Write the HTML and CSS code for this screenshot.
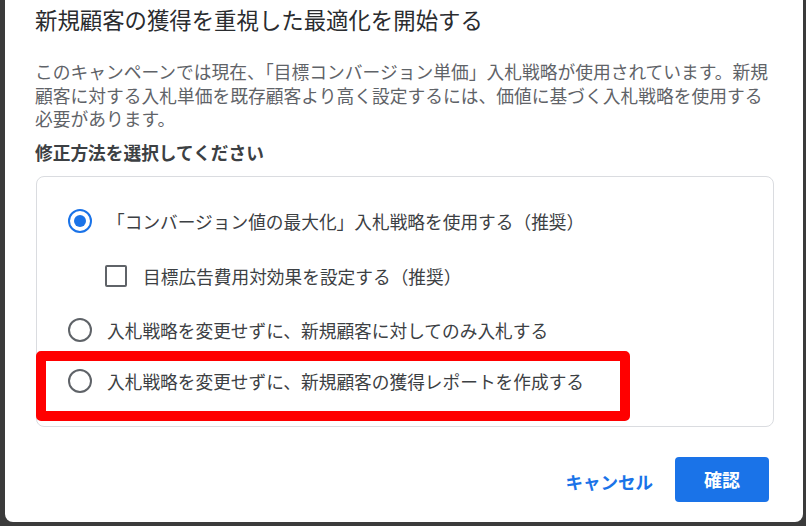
FILE: index.html
```html
<!DOCTYPE html>
<html lang="ja">
<head>
<meta charset="utf-8">
<title>新規顧客の獲得を重視した最適化を開始する</title>
<link rel="stylesheet" href="styles.css">
</head>
<body>
<div class="screen">
  <div class="dialog">
    <h1 class="title">新規顧客の獲得を重視した最適化を開始する</h1>
    <p class="desc">このキャンペーンでは現在、「目標コンバージョン単価」入札戦略が使用されています。新規<br>顧客に対する入札単価を既存顧客より高く設定するには、価値に基づく入札戦略を使用する<br>必要があります。</p>
    <h2 class="heading">修正方法を選択してください</h2>
    <div class="options">
      <div class="row row-1">
        <span class="radio checked"></span>
        <span class="label">「コンバージョン値の最大化」入札戦略を使用する（推奨）</span>
      </div>
      <div class="row row-2 sub">
        <span class="checkbox"></span>
        <span class="label label-check">目標広告費用対効果を設定する（推奨）</span>
      </div>
      <div class="row row-3">
        <span class="radio"></span>
        <span class="label">入札戦略を変更せずに、新規顧客に対してのみ入札する</span>
      </div>
      <div class="row row-4">
        <span class="radio"></span>
        <span class="label">入札戦略を変更せずに、新規顧客の獲得レポートを作成する</span>
      </div>
      <div class="highlight"></div>
    </div>
    <div class="footer">
      <span class="cancel">キャンセル</span>
      <span class="confirm">確認</span>
    </div>
  </div>
</div>
</body>
</html>
```
FILE: styles.css
```css
html, body {
  margin: 0;
  padding: 0;
}
body {
  background: #3b3b3b;
  font-family: "Noto Sans CJK JP", "Noto Sans", sans-serif;
  width: 806px;
  height: 526px;
  overflow: hidden;
}
.screen {
  display: flex;
  padding-left: 5px;
}
.dialog {
  width: 798px;
  height: 522px;
  box-sizing: border-box;
  background: #ffffff;
  border-radius: 0 0 8px 8px;
  padding: 0 29px 20px 30px;
  display: flex;
  flex-direction: column;
}
.title {
  margin: 0;
  padding-top: 4px;
  font-size: 22.4px;
  line-height: 30px;
  font-weight: 400;
  color: #2a2c2f;
  white-space: nowrap;
}
.desc {
  margin: 26px 0 0;
  font-size: 17.75px;
  line-height: 23.5px;
  color: #5f6368;
  white-space: nowrap;
}
.heading {
  margin: 9px 0 0;
  font-size: 17.7px;
  line-height: 24px;
  font-weight: 700;
  color: #3c4043;
}
.options {
  position: relative;
  margin: 12px 0 0 1px;
  height: 251px;
  box-sizing: border-box;
  border: 1px solid #dadce0;
  border-radius: 8px;
  padding: 23px 0 0 31px;
}
.row {
  display: flex;
  align-items: center;
  height: 42px;
}
.row-2 { margin-top: 13px; padding-left: 37px; }
.row-3 { margin-top: 12px; }
.row-4 { margin-top: 9px; }
.radio {
  width: 24px;
  height: 24px;
  box-sizing: border-box;
  border: 2.5px solid #5f6368;
  border-radius: 50%;
  display: flex;
  align-items: center;
  justify-content: center;
  flex: none;
}
.radio.checked {
  border-color: #1a73e8;
}
.radio.checked::after {
  content: "";
  width: 12px;
  height: 12px;
  border-radius: 50%;
  background: #1a73e8;
}
.checkbox {
  width: 22px;
  height: 22px;
  box-sizing: border-box;
  border: 2.5px solid #5f6368;
  border-radius: 2px;
  flex: none;
}
.label {
  margin-left: 15px;
  font-size: 17.7px;
  line-height: 24px;
  color: #3c4043;
  white-space: nowrap;
}
.label-check {
  margin-left: 16px;
}
.highlight {
  position: absolute;
  left: -1px;
  top: 174px;
  width: 594px;
  height: 70px;
  box-sizing: border-box;
  border: 10px solid #ff0000;
  border-radius: 5px;
}
.footer {
  margin-top: 30px;
  display: flex;
  justify-content: flex-end;
  align-items: center;
  gap: 22px;
  padding-right: 5px;
}
.cancel {
  color: #1a73e8;
  font-size: 17.5px;
  font-weight: 700;
  line-height: 24px;
  padding-top: 6px;
}
.confirm {
  width: 94px;
  height: 45px;
  border-radius: 4px;
  background: #1a73e8;
  color: #ffffff;
  font-size: 18px;
  font-weight: 700;
  display: flex;
  align-items: center;
  justify-content: center;
}
```
